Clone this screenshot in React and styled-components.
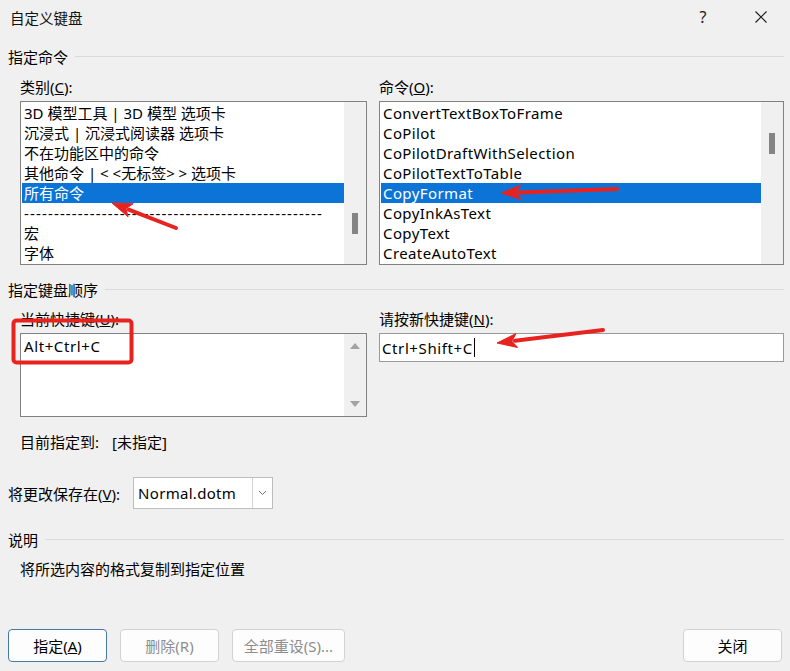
import React from 'react';
import styled, { createGlobalStyle } from 'styled-components';

const GlobalStyle = createGlobalStyle`
  html, body {
    margin: 0;
    padding: 0;
    background: #f0f0f0;
  }
  body {
    font-family: 'Noto Sans', 'Noto Sans CJK SC', sans-serif;
    font-size: 15px;
    color: #000;
  }
  * {
    box-sizing: border-box;
  }
`;

const categories = [
  '3D 模型工具 | 3D 模型 选项卡',
  '沉浸式 | 沉浸式阅读器 选项卡',
  '不在功能区中的命令',
  '其他命令 | < <无标签> > 选项卡',
  '所有命令',
  '-'.repeat(50),
  '宏',
  '字体',
];

const commands = [
  'ConvertTextBoxToFrame',
  'CoPilot',
  'CoPilotDraftWithSelection',
  'CoPilotTextToTable',
  'CopyFormat',
  'CopyInkAsText',
  'CopyText',
  'CreateAutoText',
];

const Arrow = ({ from, to }) => {
  const dx = to[0] - from[0];
  const dy = to[1] - from[1];
  const len = Math.hypot(dx, dy);
  const ux = dx / len;
  const uy = dy / len;
  const head = 20;
  const half = 7;
  const bx = to[0] - ux * head;
  const by = to[1] - uy * head;
  const px = -uy;
  const py = ux;
  return (
    <g fill="#e8231f" stroke="#e8231f">
      <line x1={from[0]} y1={from[1]} x2={bx + ux * 2} y2={by + uy * 2} strokeWidth="4" strokeLinecap="round" />
      <polygon
        points={`${to[0]},${to[1]} ${bx + px * half},${by + py * half} ${bx + ux * 5},${by + uy * 5} ${bx - px * half},${by - py * half}`}
        strokeWidth="1"
        strokeLinejoin="round"
      />
    </g>
  );
};

const App = () => {
  return (
    <>
      <GlobalStyle />
      <Dialog>
        <TitleBar>
          <Title>自定义键盘</Title>
          <TitleButton>?</TitleButton>
          <TitleButton>
            <svg width="14" height="14" viewBox="0 0 14 14">
              <path d="M1.5 1.5 L12.5 12.5 M12.5 1.5 L1.5 12.5" stroke="#1a1a1a" strokeWidth="1.1" />
            </svg>
          </TitleButton>
        </TitleBar>

        <Body>
          <GroupHeader>
            <span>指定命令</span>
            <Rule />
          </GroupHeader>
          <Columns $top={11}>
            <Field>
              <Label>类别(<u>C</u>):</Label>
              <ListBox>
                <ListItems>
                  {categories.map((c, i) => (
                    <ListItem key={i} $selected={i === 4} $spacing={i === 5 ? 1.15 : 0}>{c}</ListItem>
                  ))}
                </ListItems>
                <ScrollTrack>
                  <Thumb $offset={111} />
                </ScrollTrack>
              </ListBox>
            </Field>
            <Field>
              <Label>命令(<u>O</u>):</Label>
              <ListBox>
                <ListItems>
                  {commands.map((c, i) => (
                    <ListItem key={i} $selected={i === 4} $spacing={0.4}>{c}</ListItem>
                  ))}
                </ListItems>
                <ScrollTrack>
                  <Thumb $offset={31} />
                </ScrollTrack>
              </ListBox>
            </Field>
          </Columns>

          <GroupHeader $top={14}>
            <span>指定键盘顺序</span>
            <Rule />
          </GroupHeader>
          <Columns $top={10}>
            <Field>
              <Label>当前快捷键(<u>U</u>):</Label>
              <KeyList>
                <KeyText>Alt+Ctrl+C</KeyText>
                <SpinTrack>
                  <Tri $up />
                  <Tri />
                </SpinTrack>
              </KeyList>
            </Field>
            <Field>
              <Label>请按新快捷键(<u>N</u>):</Label>
              <KeyInput>
                Ctrl+Shift+C<Caret />
              </KeyInput>
            </Field>
          </Columns>
          <Assigned>
            <AssignedLabel>目前指定到:</AssignedLabel>
            <span>[未指定]</span>
          </Assigned>

          <SaveRow>
            <span>将更改保存在(<u>V</u>):</span>
            <Select>
              <SelectValue>Normal.dotm</SelectValue>
              <SelectArrow>
                <svg width="9" height="6" viewBox="0 0 9 6">
                  <path d="M1 1 L4.5 4.5 L8 1" fill="none" stroke="#707070" strokeWidth="1" />
                </svg>
              </SelectArrow>
            </Select>
          </SaveRow>

          <GroupHeader $top={20}>
            <span>说明</span>
            <Rule />
          </GroupHeader>
          <Description>将所选内容的格式复制到指定位置</Description>

          <ButtonRow>
            <Button $default>指定(<u>A</u>)</Button>
            <Button $disabled>删除(R)</Button>
            <Button $disabled $wide>全部重设(S)...</Button>
            <Spacer />
            <Button>关闭</Button>
          </ButtonRow>
        </Body>

        <Overlay width="790" height="671" viewBox="0 0 790 671">
          <rect x="13.5" y="320.5" width="118" height="42" rx="3" fill="none" stroke="#e8231f" strokeWidth="4" />
          <Arrow from={[176, 228]} to={[112, 203]} />
          <Arrow from={[617, 189]} to={[501, 193]} />
          <Arrow from={[603, 330]} to={[497, 343]} />
        </Overlay>
      </Dialog>
    </>
  );
};

const Dialog = styled.div`
  position: relative;
  width: 790px;
  height: 671px;
  background: #f0f0f0;
  display: flex;
  flex-direction: column;
  overflow: hidden;
`;

const TitleBar = styled.div`
  height: 34px;
  display: flex;
  align-items: center;
  padding-left: 10px;
`;

const Title = styled.div`
  flex: 1;
  font-size: 14.5px;
  color: #111;
`;

const TitleButton = styled.div`
  width: 58px;
  height: 34px;
  display: flex;
  align-items: center;
  justify-content: center;
  font-size: 16px;
  color: #1a1a1a;
`;

const Body = styled.div`
  flex: 1;
  display: flex;
  flex-direction: column;
  padding: 0 6px 9px 8px;
`;

const GroupHeader = styled.div`
  display: flex;
  align-items: center;
  gap: 7px;
  height: 20px;
  margin-top: ${(p) => p.$top ?? 12}px;
`;

const Rule = styled.div`
  flex: 1;
  height: 1px;
  background: #dadada;
`;

const Columns = styled.div`
  display: grid;
  grid-template-columns: 347px 405px;
  column-gap: 12px;
  align-items: start;
  padding-left: 12px;
  margin-top: ${(p) => p.$top}px;
`;

const Field = styled.div`
  display: flex;
  flex-direction: column;
  gap: 4px;
`;

const Label = styled.div`
  height: 20px;
  line-height: 20px;
  white-space: nowrap;
`;

const ListBox = styled.div`
  height: 164px;
  border: 1px solid #828282;
  background: #fff;
  display: flex;
`;

const ListItems = styled.div`
  flex: 1;
  padding: 1px 0 0 1px;
  overflow: hidden;
`;

const ListItem = styled.div`
  height: 20px;
  line-height: 20px;
  padding-left: 2px;
  white-space: nowrap;
  overflow: hidden;
  background: ${(p) => (p.$selected ? '#0b74d6' : 'transparent')};
  color: ${(p) => (p.$selected ? '#fff' : '#000')};
  letter-spacing: ${(p) => p.$spacing}px;
`;

const ScrollTrack = styled.div`
  width: 22px;
  background: #f0f0f0;
  display: flex;
  justify-content: center;
`;

const Thumb = styled.div`
  width: 6px;
  height: 21px;
  margin-top: ${(p) => p.$offset}px;
  background: #858585;
`;

const KeyList = styled.div`
  height: 84px;
  border: 1px solid #828282;
  background: #fff;
  display: flex;
`;

const KeyText = styled.div`
  flex: 1;
  padding: 2px 0 0 3px;
  line-height: 20px;
  letter-spacing: 0.6px;
`;

const SpinTrack = styled.div`
  width: 22px;
  background: #f0f0f0;
  display: flex;
  flex-direction: column;
  align-items: center;
  justify-content: space-between;
  padding: 9px 0 9px;
`;

const Tri = styled.div`
  width: 0;
  height: 0;
  border-left: 5px solid transparent;
  border-right: 5px solid transparent;
  ${(p) => (p.$up ? 'border-bottom: 6px solid #a3a3a3;' : 'border-top: 6px solid #a3a3a3;')}
`;

const KeyInput = styled.div`
  height: 29px;
  border: 1px solid #9a9a9a;
  background: #fff;
  display: flex;
  align-items: center;
  padding-left: 2px;
  letter-spacing: 0.6px;
`;

const Caret = styled.span`
  display: inline-block;
  width: 1px;
  height: 19px;
  margin-left: 1px;
  background: #000;
`;

const Assigned = styled.div`
  display: flex;
  align-items: center;
  height: 20px;
  margin-top: 14px;
  padding-left: 12px;
`;

const AssignedLabel = styled.span`
  width: 92px;
`;

const SaveRow = styled.div`
  display: flex;
  align-items: center;
  gap: 13px;
  margin-top: 26px;
`;

const Select = styled.div`
  width: 140px;
  height: 32px;
  border: 1px solid #bdbdbd;
  background: #fff;
  display: flex;
`;

const SelectValue = styled.div`
  flex: 1;
  display: flex;
  align-items: center;
  padding-left: 4px;
  letter-spacing: 0.3px;
`;

const SelectArrow = styled.div`
  width: 20px;
  border-left: 1px solid #d4d4d4;
  display: flex;
  align-items: center;
  justify-content: center;
`;

const Description = styled.div`
  height: 20px;
  line-height: 20px;
  margin-top: 10px;
  padding-left: 12px;
`;

const ButtonRow = styled.div`
  margin-top: auto;
  display: flex;
  gap: 13px;
  padding-right: 2px;
`;

const Spacer = styled.div`
  flex: 1;
`;

const Button = styled.div`
  width: ${(p) => (p.$wide ? 113 : 99)}px;
  height: 33px;
  display: flex;
  align-items: center;
  justify-content: center;
  background: #fdfdfd;
  border: 1px solid ${(p) => (p.$default ? '#4a78a6' : '#d2d2d2')};
  border-radius: 4px;
  color: ${(p) => (p.$disabled ? '#8d8d8d' : '#000')};
  white-space: nowrap;
`;

const Overlay = styled.svg`
  position: absolute;
  left: 0;
  top: 0;
  pointer-events: none;
`;

export default App;
